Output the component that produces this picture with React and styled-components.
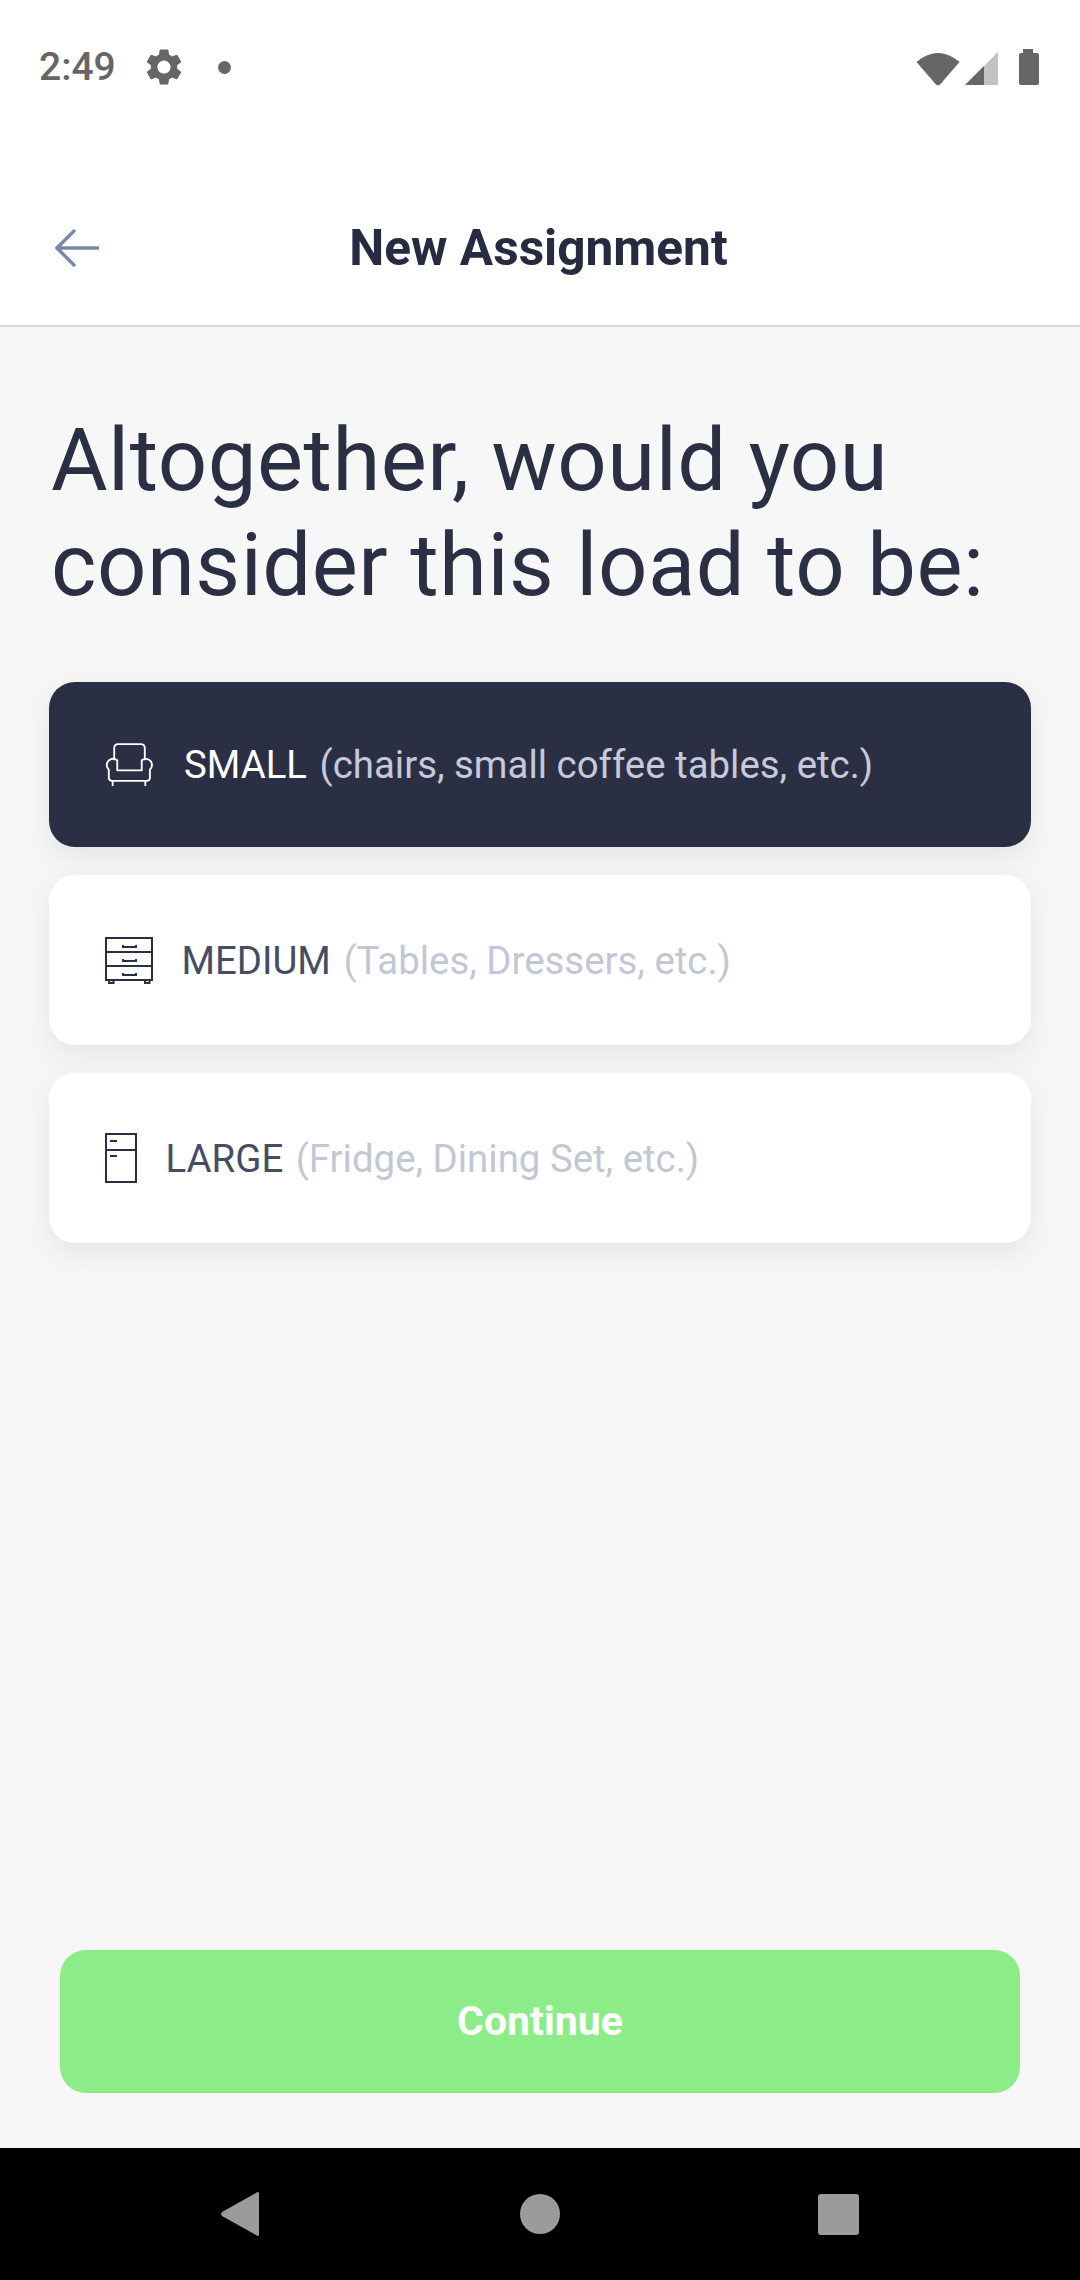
import React from "react";
import styled, { createGlobalStyle } from "styled-components";

const Global = createGlobalStyle`
  html, body { margin: 0; padding: 0; background: #f7f7f7; }
  * { box-sizing: border-box; }
  body { font-family: Roboto, "Liberation Sans", sans-serif; }
`;

const Page = styled.div`
  width: 1080px;
  height: 2280px;
  display: flex;
  flex-direction: column;
  background: #f7f7f7;
`;

const StatusBar = styled.div`
  height: 133px;
  flex: none;
  background: #fff;
  display: flex;
  justify-content: space-between;
  align-items: flex-start;
  padding: 49px 41px 0 39px;
  color: #666;
`;

const StatusGroup = styled.div`
  display: flex;
  align-items: center;
  height: 36px;
`;

const Time = styled.span`
  font-size: 39px;
  line-height: 36px;
  font-weight: 500;
  color: #666;
  width: 103px;
`;

const Header = styled.header`
  flex: none;
  height: 194px;
  background: #fff;
  border-bottom: 2px solid #d8d8d8;
  display: grid;
  grid-template-columns: 1fr auto 1fr;
  align-items: center;
  padding: 38px 58px 0 55px;
`;

const BackButton = styled.div`
  width: 44px;
  height: 38px;
  display: flex;
`;

const Title = styled.h1`
  margin: 0;
  font-size: 49.6px;
  line-height: 60px;
  font-weight: 700;
  color: #272b42;
`;

const Content = styled.main`
  flex: 1;
  display: flex;
  flex-direction: column;
  padding: 81px 49px 0;
`;

const Question = styled.h2`
  margin: 0 0 64px 2px;
  font-size: 86.8px;
  line-height: 105px;
  font-weight: 400;
  color: #2b2f44;
  letter-spacing: 0.5px;
  white-space: nowrap;
`;

const Options = styled.div`
  display: flex;
  flex-direction: column;
  gap: 28px;
`;

const Option = styled.div`
  height: ${(p) => p.$h}px;
  border-radius: 26px;
  background: ${(p) => (p.$active ? "#2b2f44" : "#fff")};
  box-shadow: 0 10px 30px rgba(0, 0, 0, 0.08);
  display: flex;
  align-items: center;
  gap: ${(p) => (p.$active ? 29.5 : 28.5)}px;
  padding-left: ${(p) => (p.$active ? 54.5 : 55)}px;
  font-size: 38.4px;
  color: ${(p) => (p.$active ? "#fff" : "#454d63")};
`;

const OptionText = styled.div`
  display: flex;
  gap: 12.5px;
  white-space: nowrap;
`;

const Hint = styled.span`
  color: ${(p) => (p.$active ? "#c5c9da" : "#c3c7d5")};
`;

const Footer = styled.div`
  margin-top: auto;
  padding: 0 11px 55px;
`;

const Continue = styled.div`
  height: 143px;
  padding-bottom: 2px;
  border-radius: 26px;
  background: #8bec88;
  color: #fff;
  font-size: 41px;
  font-weight: 700;
  display: flex;
  align-items: center;
  justify-content: center;
`;

const NavBar = styled.nav`
  flex: none;
  height: 132px;
  background: #000;
  display: flex;
  align-items: center;
  justify-content: center;
`;

const NavSlot = styled.div`
  width: 298px;
  display: flex;
  justify-content: center;
`;

const Gear = () => (
  <svg width="44" height="44" viewBox="0 0 24 24" fill="#666" style={{ marginRight: 32 }}>
    <path d="M19.14 12.94c.04-.3.06-.61.06-.94 0-.32-.02-.64-.07-.94l2.03-1.58c.18-.14.23-.41.12-.61l-1.92-3.32c-.12-.22-.37-.29-.59-.22l-2.39.96c-.5-.38-1.03-.7-1.62-.94l-.36-2.54c-.04-.24-.24-.41-.48-.41h-3.84c-.24 0-.43.17-.47.41l-.36 2.54c-.59.24-1.13.57-1.62.94l-2.39-.96c-.22-.08-.47 0-.59.22L2.74 8.87c-.12.21-.08.47.12.61l2.03 1.58c-.05.3-.09.63-.09.94s.02.64.07.94l-2.03 1.58c-.18.14-.23.41-.12.61l1.92 3.32c.12.22.37.29.59.22l2.39-.96c.5.38 1.03.7 1.62.94l.36 2.54c.05.24.24.41.48.41h3.84c.24 0 .44-.17.47-.41l.36-2.54c.59-.24 1.13-.56 1.62-.94l2.39.96c.22.08.47 0 .59-.22l1.92-3.32c.12-.22.07-.47-.12-.61l-2.01-1.58zM12 15.6c-1.98 0-3.6-1.62-3.6-3.6s1.62-3.6 3.6-3.6 3.6 1.62 3.6 3.6-1.62 3.6-3.6 3.6z" />
  </svg>
);

const Dot = () => (
  <svg width="13" height="13" viewBox="0 0 13 13"><circle cx="6.5" cy="6.5" r="6.5" fill="#666" /></svg>
);

const SystemIcons = () => (
  <svg width="122" height="37" viewBox="0 0 122 37">
    <path d="M0 11 Q21 -6 42 11 L23 33 Q21 35 19 33 Z" fill="#666" stroke="#666" strokeWidth="1" strokeLinejoin="round" transform="translate(0,2)" />
    <path d="M48 36 L81 3 V36 Z" fill="#c2c2c2" />
    <path d="M48 36 L67 17 V36 Z" fill="#666" />
    <path d="M106 0 H116 V4 H120 Q122 4 122 6 V34 Q122 36 120 36 H104 Q102 36 102 34 V6 Q102 4 104 4 H106 Z" fill="#666" />
  </svg>
);

const BackArrow = () => (
  <svg width="44" height="38" viewBox="0 0 44 38" fill="none" stroke="#7a86a8" strokeWidth="3.4" strokeLinecap="round" strokeLinejoin="round">
    <path d="M2 19 H43" />
    <path d="M19 2 L2 19 L19 36" />
  </svg>
);

const ChairIcon = () => (
  <svg width="51" height="43" viewBox="0 0 50 42" fill="none" stroke="#fff" strokeWidth="1.8" strokeLinecap="round" strokeLinejoin="round" style={{ flex: "none" }}>
    <path d="M10 16 V5 Q10 1 14 1 H36 Q40 1 40 5 V16" />
    <path d="M13 17 V26.7 H37 V17" />
    <path d="M13 17 A6 6 0 1 0 4.7 26 V34 Q4.7 37 8 37 H42 Q45 37 45 34 V26 A6 6 0 1 0 37 17" />
    <path d="M8.5 37 V41.5 M40.5 37 V41.5" />
  </svg>
);

const DresserIcon = () => (
  <svg width="48" height="47" viewBox="0 0 48 47" fill="none" stroke="#2b2f44" strokeWidth="2" style={{ flex: "none", marginLeft: 1 }}>
    <rect x="1" y="1" width="46" height="42" />
    <path d="M1 15 H47 M1 29 H47" />
    <path d="M18 8 V10 H31 V8 M18 22 V24 H31 V22 M18 36 V38 H31 V36" />
    <path d="M4 43 V46 H8.5 V43 M40 43 V46 H44.5 V43" />
  </svg>
);

const FridgeIcon = () => (
  <svg width="32" height="50" viewBox="0 0 32 50" fill="none" stroke="#2b2f44" strokeWidth="2" style={{ flex: "none", marginLeft: 1 }}>
    <rect x="1" y="1" width="30" height="48" />
    <path d="M1 17 H31" />
    <path d="M5 8 H12 M5 23 H12" />
  </svg>
);

const NavBack = () => (
  <svg width="40" height="46" viewBox="0 0 40 46" style={{ marginLeft: -4 }}><path d="M39 2 V44 Q38 46 36 44 L2 25 Q0 23 2 21 L36 2 Q38 0 39 2 Z" fill="#9b9b9b" /></svg>
);

const NavHome = () => (
  <svg width="40" height="40" viewBox="0 0 40 40"><circle cx="20" cy="20" r="20" fill="#9b9b9b" /></svg>
);

const NavRecent = () => (
  <svg width="41" height="41" viewBox="0 0 41 41"><rect width="41" height="41" rx="3" fill="#9b9b9b" /></svg>
);

export default function App() {
  return (
    <Page>
      <Global />
      <StatusBar>
        <StatusGroup>
          <Time>2:49</Time>
          <Gear />
          <Dot />
        </StatusGroup>
        <StatusGroup>
          <SystemIcons />
        </StatusGroup>
      </StatusBar>
      <Header>
        <BackButton><BackArrow /></BackButton>
        <Title>New Assignment</Title>
        <span />
      </Header>
      <Content>
        <Question>Altogether, would you<br />consider this load to be:</Question>
        <Options>
          <Option $active $h={165}>
            <ChairIcon />
            <OptionText>SMALL <Hint $active>(chairs, small coffee tables, etc.)</Hint></OptionText>
          </Option>
          <Option $h={170}>
            <DresserIcon />
            <OptionText>MEDIUM <Hint>(Tables, Dressers, etc.)</Hint></OptionText>
          </Option>
          <Option $h={170}>
            <FridgeIcon />
            <OptionText>LARGE <Hint>(Fridge, Dining Set, etc.)</Hint></OptionText>
          </Option>
        </Options>
        <Footer>
          <Continue>Continue</Continue>
        </Footer>
      </Content>
      <NavBar>
        <NavSlot><NavBack /></NavSlot>
        <NavSlot><NavHome /></NavSlot>
        <NavSlot><NavRecent /></NavSlot>
      </NavBar>
    </Page>
  );
}
